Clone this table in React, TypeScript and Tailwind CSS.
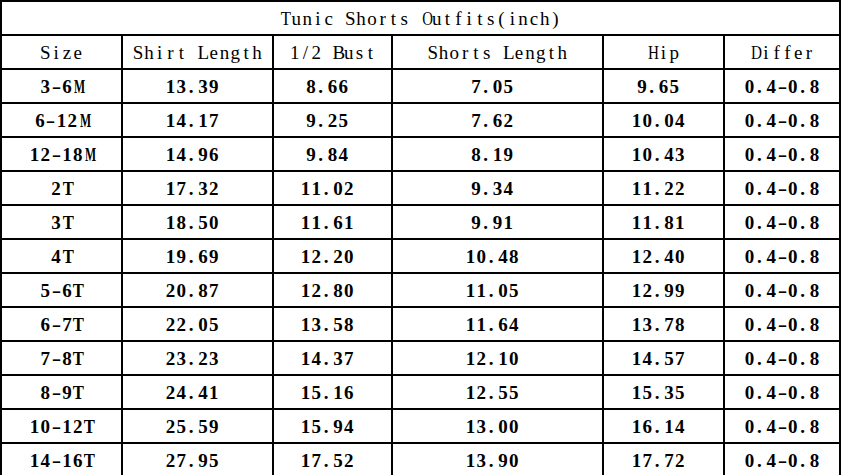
import React from "react";

const headers = ["Size", "Shirt Length", "1/2 Bust", "Shorts Length", "Hip", "Differ"];
const rows: string[][] = [
  ["3-6M", "13.39 ", "8.66 ", "7.05 ", "9.65 ", "0.4-0.8"],
  ["6-12M", "14.17 ", "9.25 ", "7.62 ", "10.04 ", "0.4-0.8"],
  ["12-18M", "14.96 ", "9.84 ", "8.19 ", "10.43 ", "0.4-0.8"],
  ["2T", "17.32 ", "11.02 ", "9.34 ", "11.22 ", "0.4-0.8"],
  ["3T", "18.50 ", "11.61 ", "9.91 ", "11.81 ", "0.4-0.8"],
  ["4T", "19.69 ", "12.20 ", "10.48 ", "12.40 ", "0.4-0.8"],
  ["5-6T", "20.87 ", "12.80 ", "11.05 ", "12.99 ", "0.4-0.8"],
  ["6-7T", "22.05 ", "13.58 ", "11.64 ", "13.78 ", "0.4-0.8"],
  ["7-8T", "23.23 ", "14.37 ", "12.10 ", "14.57 ", "0.4-0.8"],
  ["8-9T", "24.41 ", "15.16 ", "12.55 ", "15.35 ", "0.4-0.8"],
  ["10-12T", "25.59 ", "15.94 ", "13.00 ", "16.14 ", "0.4-0.8"],
  ["14-16T", "27.95 ", "17.52 ", "13.90 ", "17.72 ", "0.4-0.8"],
];

const charClass: Record<string, string> = {
  M: "scale-x-[0.62]",
  O: "scale-x-[0.78]",
  H: "scale-x-[0.8]",
  D: "scale-x-[0.8]",
  T: "scale-x-[0.88]",
  "-": "scale-x-150",
  ".": "text-left pl-[2px]",
};

function Mono({ text }: { text: string }) {
  return (
    <span className="inline-flex whitespace-pre">
      {text.split("").map((ch, i) => (
        <span
          key={i}
          className={`inline-block w-[10.8px] text-center ${charClass[ch] ?? ""}`}
        >
          {ch}
        </span>
      ))}
    </span>
  );
}

export default function App() {
  return (
    <div className="w-[841px] h-[475px] overflow-hidden bg-white text-black">
      <div
        className="grid grid-cols-[121px_151px_119px_211px_121px_116px] border-l-2 border-t-2 border-black text-[19px] leading-none"
        style={{ fontFamily: '"Liberation Serif", serif' }}
      >
        <div className="col-span-6 h-[34px] border-r-2 border-b-2 border-black flex items-center justify-center">
          <Mono text="Tunic Shorts Outfits(inch)" />
        </div>
        {headers.map((h) => (
          <div
            key={h}
            className="h-[34px] border-r-2 border-b-2 border-black flex items-center justify-center"
          >
            <Mono text={h} />
          </div>
        ))}
        {rows.map((r, i) =>
          r.map((c, j) => (
            <div
              key={`${i}-${j}`}
              className="h-[34px] border-r-2 border-b-2 border-black flex items-center justify-center font-bold"
            >
              <Mono text={c} />
            </div>
          ))
        )}
      </div>
    </div>
  );
}
